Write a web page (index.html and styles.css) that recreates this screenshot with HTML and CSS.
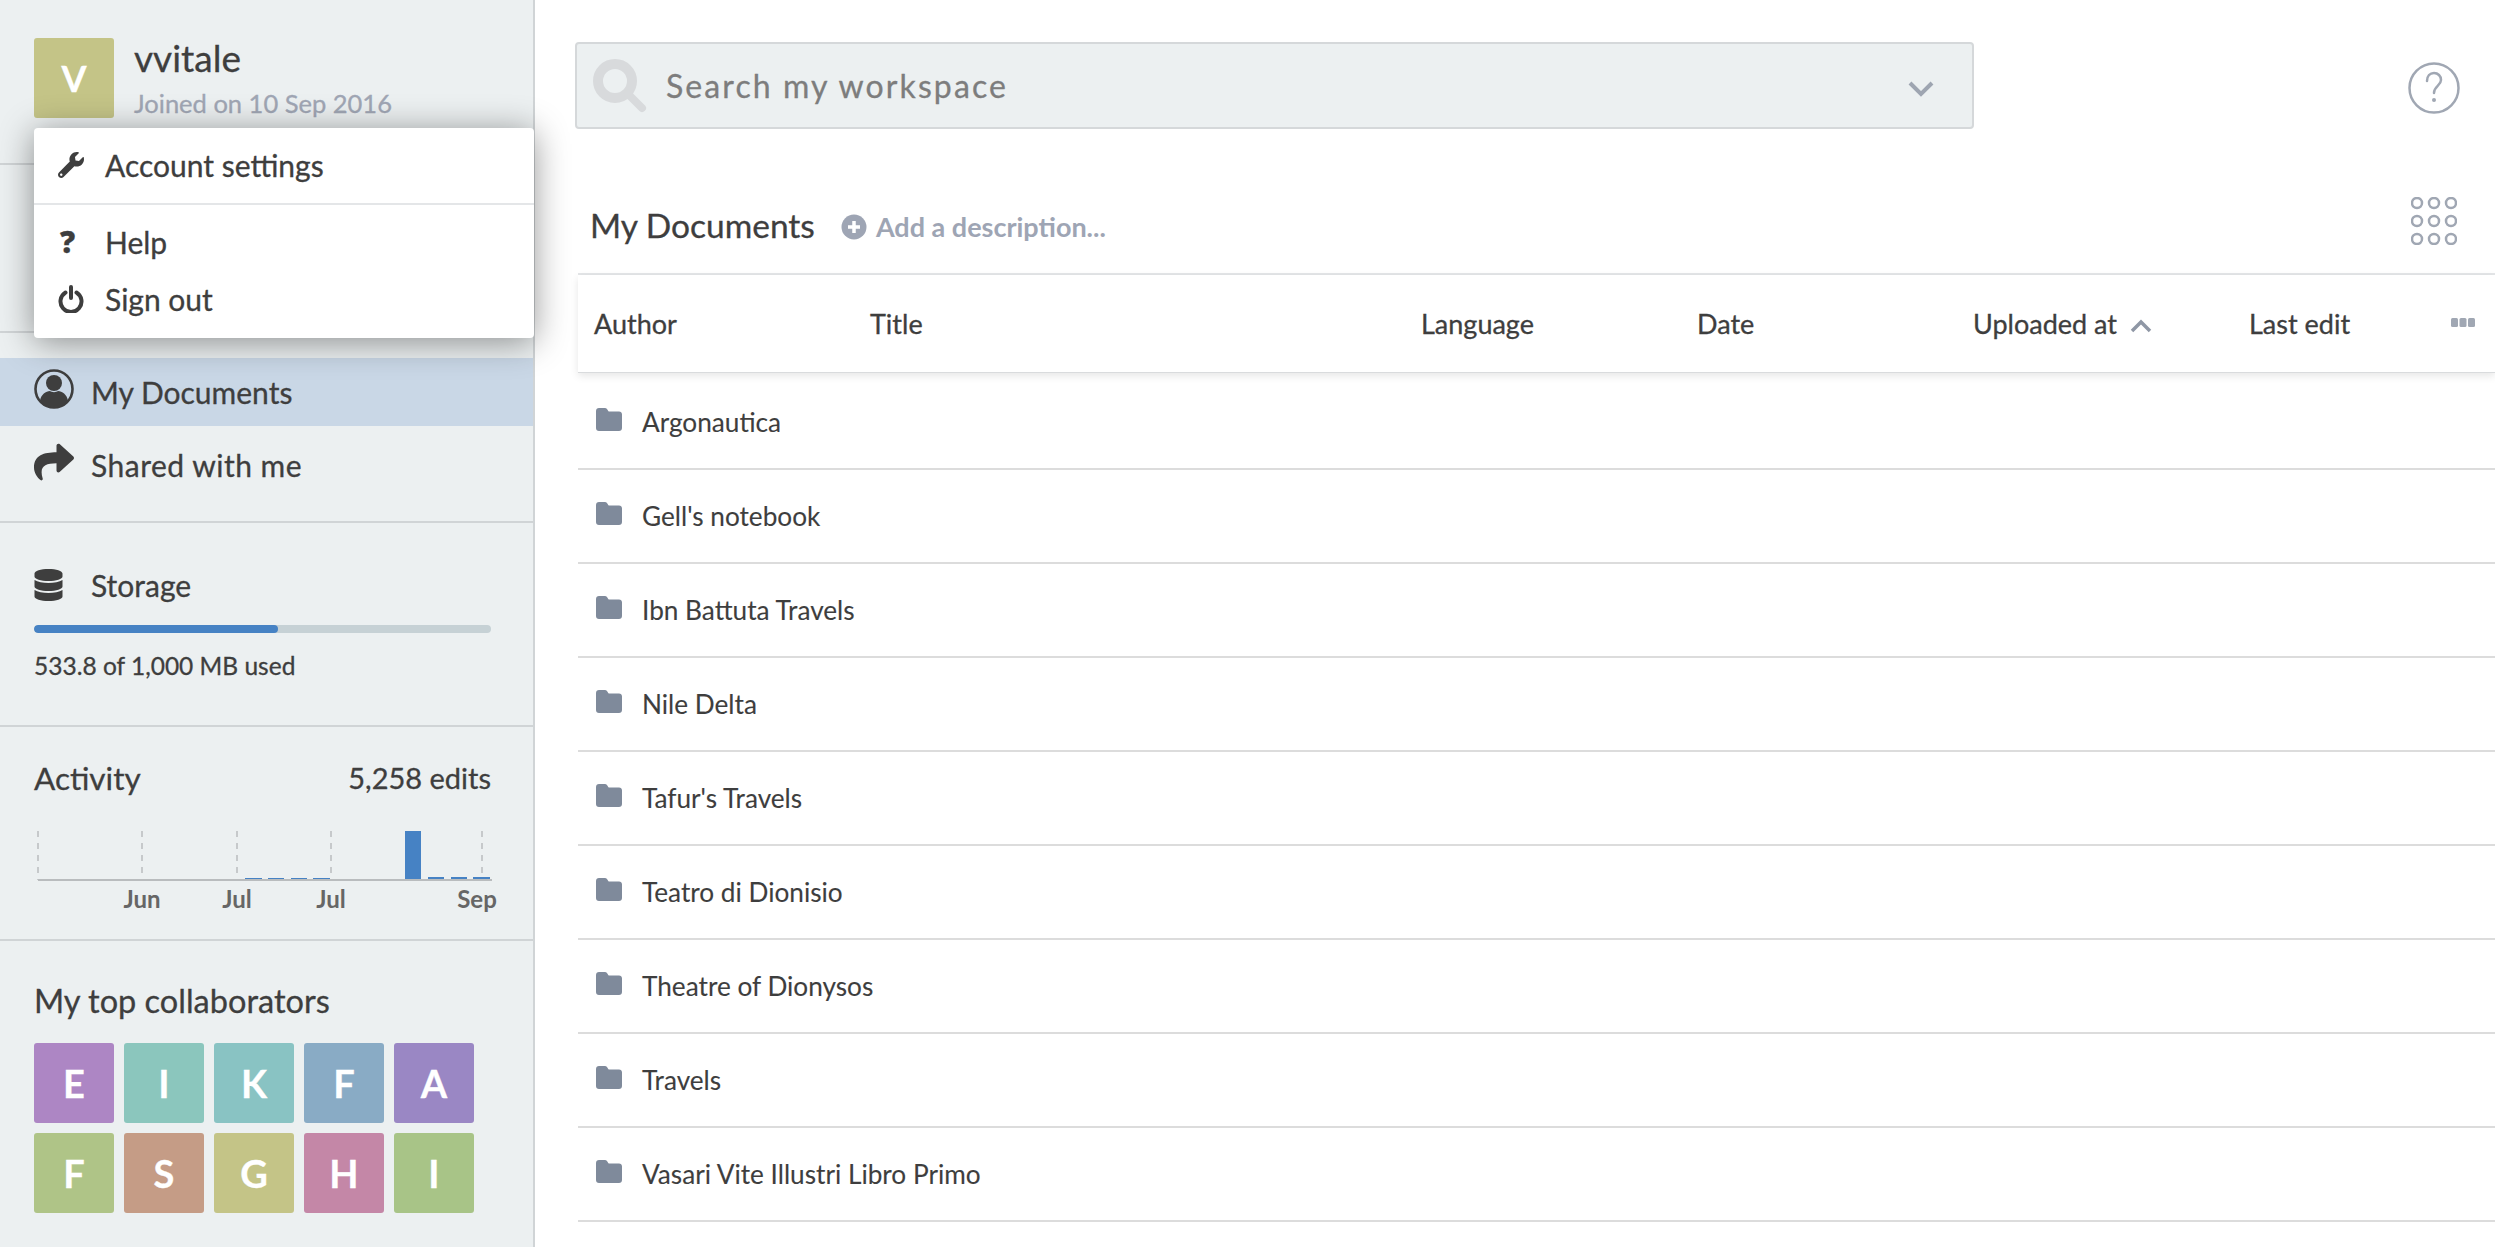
FILE: index.html
```html
<!DOCTYPE html>
<html>
<head>
  <title>My Documents</title>
  <link rel="stylesheet" href="styles.css">
</head>
<body>
  <div class="page">
    <aside class="sidebar">
      <div class="user-box">
        <div class="avatar tile-v">V</div>
        <div class="user-info">
          <div class="user-name">vvitale</div>
          <div class="user-joined">Joined on 10 Sep 2016</div>
        </div>
      </div>

      <div class="user-menu">
        <div class="menu-group menu-first">
          <div class="menu-item">
            <svg class="menu-icon" viewBox="0 0 512 512"><path fill="#3e3e3e" d="M507.73 109.1c-2.24-9.03-13.54-12.09-20.12-5.51l-74.36 74.36-67.88-11.31-11.31-67.88 74.36-74.36c6.62-6.62 3.43-17.9-5.66-20.16-47.38-11.74-99.55.91-136.58 37.93-39.64 39.64-50.55 97.1-34.05 147.2L18.74 402.76c-24.99 24.99-24.99 65.51 0 90.5 24.99 24.99 65.51 24.99 90.5 0l213.21-213.21c50.12 16.71 107.47 5.68 147.37-34.22 37.07-37.07 49.7-89.32 37.91-136.73zM64 472c-13.25 0-24-10.75-24-24 0-13.26 10.75-24 24-24s24 10.74 24 24c0 13.25-10.75 24-24 24z"/></svg>
            Account settings
          </div>
        </div>
        <div class="menu-group">
          <div class="menu-item menu-help">
            <span class="menu-icon question">?</span>
            Help
          </div>
          <div class="menu-item menu-signout">
            <svg class="menu-icon" viewBox="0 0 26 28"><path fill="none" stroke="#3e3e3e" stroke-width="4" stroke-linecap="round" d="M7.5 7.500a10.500 10.500 0 1 0 11 0M13 2v11"/></svg>
            Sign out
          </div>
        </div>
      </div>

      <div class="side-spacer"></div>

      <nav class="side-nav">
        <div class="nav-item active">
          <svg class="nav-icon" viewBox="0 0 40 42">
            <circle cx="20" cy="21" r="18.500" fill="none" stroke="#3e3e3e" stroke-width="2.600"/>
            <circle cx="20" cy="15" r="8" fill="#3e3e3e"/>
            <path fill="#3e3e3e" d="M6 33c1-7 6-9.500 10-10 2 1.500 6 1.500 8 0 4 .5 9 3 10 10-7 8-21 8-28 0z"/>
          </svg>
          My Documents
        </div>
        <div class="nav-item shared">
          <svg class="nav-icon" viewBox="0 0 512 512" preserveAspectRatio="none"><path fill="#3e3e3e" d="M503.691 189.836L327.687 37.851C312.281 24.546 288 35.347 288 56.015v80.053C127.371 137.907 0 170.1 0 322.326c0 61.441 39.581 122.309 83.333 154.132 13.653 9.931 33.111-2.533 28.077-18.631C66.066 312.814 132.917 274.316 288 272.085V360c0 20.7 24.3 31.453 39.687 18.164l176.004-152c11.071-9.562 11.086-26.753 0-36.328z"/></svg>
          Shared with me
        </div>
      </nav>

      <section class="side-box storage">
        <div class="storage-title">
          <svg class="storage-icon" viewBox="0 0 448 512"><path fill="#3e3e3e" d="M448 73.143v45.714C448 159.143 347.667 192 224 192S0 159.143 0 118.857V73.143C0 32.857 100.333 0 224 0s224 32.857 224 73.143zM448 176v102.857C448 319.143 347.667 352 224 352S0 319.143 0 278.857V176c48.125 33.143 136.208 48.572 224 48.572S399.874 209.143 448 176zm0 160v102.857C448 479.143 347.667 512 224 512S0 479.143 0 438.857V336c48.125 33.143 136.208 48.572 224 48.572S399.874 369.143 448 336z"/></svg>
          Storage
        </div>
        <div class="storage-bar"><div class="storage-fill" style="width: 53.38%"></div></div>
        <div class="storage-text">533.8 of 1,000 MB used</div>
      </section>

      <section class="side-box activity">
        <div class="activity-head">
          <span class="activity-title">Activity</span>
          <span class="activity-count">5,258 edits</span>
        </div>
        <svg class="activity-chart" viewBox="34 826 470 90">
          <g stroke="#c6c9cb" stroke-width="2" stroke-dasharray="6 6">
            <line x1="38" y1="831" x2="38" y2="880"/>
            <line x1="142" y1="831" x2="142" y2="880"/>
            <line x1="237" y1="831" x2="237" y2="880"/>
            <line x1="331" y1="831" x2="331" y2="880"/>
            <line x1="482" y1="831" x2="482" y2="880"/>
          </g>
          <g fill="#4682c4">
            <rect x="245" y="878" width="17" height="2"/>
            <rect x="268" y="878" width="16" height="2"/>
            <rect x="291" y="878" width="16" height="2"/>
            <rect x="313" y="878" width="17" height="2"/>
            <rect x="405" y="831" width="16" height="49"/>
            <rect x="428" y="877" width="16" height="3"/>
            <rect x="451" y="877" width="16" height="3"/>
            <rect x="473" y="877" width="17" height="3"/>
          </g>
          <line x1="38" y1="880" x2="492" y2="880" stroke="#b9bcbe" stroke-width="2"/>
          <g class="chart-label" text-anchor="middle">
            <text x="142" y="908">Jun</text>
            <text x="237" y="908">Jul</text>
            <text x="331" y="908">Jul</text>
            <text x="477" y="908">Sep</text>
          </g>
        </svg>
      </section>

      <section class="collaborators">
        <div class="collab-title">My top collaborators</div>
        <div class="collab-grid">
          <div class="tile tile-e">E</div>
          <div class="tile tile-i">I</div>
          <div class="tile tile-k">K</div>
          <div class="tile tile-f">F</div>
          <div class="tile tile-a">A</div>
          <div class="tile tile-f2">F</div>
          <div class="tile tile-s">S</div>
          <div class="tile tile-v">G</div>
          <div class="tile tile-h">H</div>
          <div class="tile tile-i2">I</div>
        </div>
      </section>
    </aside>

    <main class="main">
      <div class="top-bar">
        <div class="search-box">
          <svg class="search-icon" viewBox="0 0 54 54"><circle cx="22" cy="22" r="17" fill="none" stroke="#d8dadc" stroke-width="10"/><line x1="35" y1="35" x2="49" y2="49" stroke="#d8dadc" stroke-width="8" stroke-linecap="round"/></svg>
          <span class="search-text">Search my workspace</span>
          <svg class="search-caret" viewBox="0 0 26 18"><path fill="none" stroke="#9ea5b1" stroke-width="4" d="M2 3l11 11L24 3"/></svg>
        </div>
        <svg class="help-icon" viewBox="0 0 52 52">
          <circle cx="26" cy="26" r="24.500" fill="none" stroke="#a0a7b3" stroke-width="2.500"/>
          <path fill="none" stroke="#a0a7b3" stroke-width="2.500" stroke-linecap="round" d="M19 19c0-5 3-8 7-8s7 3 7 7c0 6-7 6-7 13"/>
          <circle cx="26" cy="38" r="2" fill="#a0a7b3"/>
        </svg>
      </div>

      <div class="doc-head">
        <span class="doc-title">My Documents</span>
        <svg class="add-icon" viewBox="0 0 26 26"><circle cx="13" cy="13" r="12.500" fill="#9ea5b4"/><path stroke="#fff" stroke-width="3.500" d="M13 7v12M7 13h12"/></svg>
        <span class="add-text">Add a description...</span>
        <svg class="grid-icon" viewBox="0 0 46 48">
          <g fill="none" stroke="#a0a7b3" stroke-width="2.500">
            <circle cx="6" cy="6" r="5"/><circle cx="23" cy="6" r="5"/><circle cx="40" cy="6" r="5"/>
            <circle cx="6" cy="24" r="5"/><circle cx="23" cy="24" r="5"/><circle cx="40" cy="24" r="5"/>
            <circle cx="6" cy="42" r="5"/><circle cx="23" cy="42" r="5"/><circle cx="40" cy="42" r="5"/>
          </g>
        </svg>
      </div>

      <div class="table-head">
        <span class="col">Author</span>
        <span class="col col-wide">Title</span>
        <span class="col">Language</span>
        <span class="col">Date</span>
        <span class="col">Uploaded at
          <svg class="sort-icon" viewBox="0 0 22 14"><path fill="none" stroke="#8f97a5" stroke-width="3.500" d="M2 12l9-9 9 9"/></svg>
        </span>
        <span class="col">Last edit</span>
        <svg class="more-icon" viewBox="0 0 24 10"><g fill="#a0a7b3"><rect width="7" height="9" rx="1.500"/><rect x="8.500" width="7" height="9" rx="1.500"/><rect x="17" width="7" height="9" rx="1.500"/></g></svg>
      </div>

      <div class="doc-row"><svg class="folder" viewBox="0 0 26 23"><path fill="#7f8a9b" d="M3 0h6c1.500 0 2.300 1 2.800 2.300.3.800.8 1.200 1.700 1.200H23c1.800 0 3 1.200 3 3V20c0 1.800-1.200 3-3 3H3c-1.800 0-3-1.200-3-3V3C0 1.200 1.200 0 3 0z"/></svg>Argonautica</div>
      <div class="doc-row"><svg class="folder" viewBox="0 0 26 23"><path fill="#7f8a9b" d="M3 0h6c1.500 0 2.300 1 2.800 2.300.3.800.8 1.200 1.700 1.200H23c1.800 0 3 1.200 3 3V20c0 1.800-1.200 3-3 3H3c-1.800 0-3-1.200-3-3V3C0 1.200 1.200 0 3 0z"/></svg>Gell's notebook</div>
      <div class="doc-row"><svg class="folder" viewBox="0 0 26 23"><path fill="#7f8a9b" d="M3 0h6c1.500 0 2.300 1 2.800 2.300.3.800.8 1.200 1.700 1.200H23c1.800 0 3 1.200 3 3V20c0 1.800-1.200 3-3 3H3c-1.800 0-3-1.200-3-3V3C0 1.200 1.200 0 3 0z"/></svg>Ibn Battuta Travels</div>
      <div class="doc-row"><svg class="folder" viewBox="0 0 26 23"><path fill="#7f8a9b" d="M3 0h6c1.500 0 2.300 1 2.800 2.300.3.800.8 1.200 1.700 1.200H23c1.800 0 3 1.200 3 3V20c0 1.800-1.200 3-3 3H3c-1.800 0-3-1.200-3-3V3C0 1.200 1.200 0 3 0z"/></svg>Nile Delta</div>
      <div class="doc-row"><svg class="folder" viewBox="0 0 26 23"><path fill="#7f8a9b" d="M3 0h6c1.500 0 2.300 1 2.800 2.300.3.800.8 1.200 1.700 1.200H23c1.800 0 3 1.200 3 3V20c0 1.800-1.200 3-3 3H3c-1.800 0-3-1.200-3-3V3C0 1.200 1.200 0 3 0z"/></svg>Tafur's Travels</div>
      <div class="doc-row"><svg class="folder" viewBox="0 0 26 23"><path fill="#7f8a9b" d="M3 0h6c1.500 0 2.300 1 2.800 2.300.3.800.8 1.200 1.700 1.200H23c1.800 0 3 1.200 3 3V20c0 1.800-1.200 3-3 3H3c-1.800 0-3-1.200-3-3V3C0 1.200 1.200 0 3 0z"/></svg>Teatro di Dionisio</div>
      <div class="doc-row"><svg class="folder" viewBox="0 0 26 23"><path fill="#7f8a9b" d="M3 0h6c1.500 0 2.300 1 2.800 2.300.3.800.8 1.200 1.700 1.200H23c1.800 0 3 1.200 3 3V20c0 1.800-1.200 3-3 3H3c-1.800 0-3-1.200-3-3V3C0 1.200 1.200 0 3 0z"/></svg>Theatre of Dionysos</div>
      <div class="doc-row"><svg class="folder" viewBox="0 0 26 23"><path fill="#7f8a9b" d="M3 0h6c1.500 0 2.300 1 2.800 2.300.3.800.8 1.200 1.700 1.200H23c1.800 0 3 1.200 3 3V20c0 1.800-1.200 3-3 3H3c-1.800 0-3-1.200-3-3V3C0 1.200 1.200 0 3 0z"/></svg>Travels</div>
      <div class="doc-row"><svg class="folder" viewBox="0 0 26 23"><path fill="#7f8a9b" d="M3 0h6c1.500 0 2.300 1 2.800 2.300.3.800.8 1.200 1.700 1.200H23c1.800 0 3 1.200 3 3V20c0 1.800-1.200 3-3 3H3c-1.800 0-3-1.200-3-3V3C0 1.200 1.200 0 3 0z"/></svg>Vasari Vite Illustri Libro Primo</div>
    </main>
  </div>
</body>
</html>
```

FILE: styles.css
```css
body {
  margin: 0;
  height: 1247px;
  overflow: hidden;
  background-color: #ffffff;
  color: #3e3e3e;
  font-family: 'Lato', 'Open Sans', sans-serif;
  -webkit-text-stroke: 0.3px currentColor;
}

.page {
  display: flex;
  height: 1247px;
}

/* Sidebar */
.sidebar {
  position: relative;
  width: 533px;
  flex-shrink: 0;
  background-color: #ecf0f1;
  border-right: 2px solid #d0d4d6;
}

.user-box {
  display: flex;
  gap: 20px;
  height: 125px;
  padding: 38px 34px 0;
  border-bottom: 2px solid #d0d4d6;
}

.avatar {
  display: flex;
  align-items: center;
  justify-content: center;
  width: 80px;
  height: 80px;
  border-radius: 3px;
  color: #ffffff;
  font-size: 36px;
  font-weight: 700;
}

.user-name {
  font-size: 37px;
  line-height: 40px;
}

.user-joined {
  margin-top: 7px;
  color: #a0a6b4;
  font-size: 25.500px;
  line-height: 36px;
}

.user-menu {
  position: absolute;
  top: 128px;
  left: 34px;
  width: 500px;
  height: 210px;
  background-color: #ffffff;
  border-radius: 4px;
  box-shadow: 0 4px 34px rgba(0, 0, 0, 0.42);
  font-size: 30px;
}

.menu-group + .menu-group {
  border-top: 2px solid #e4e6e8;
}

.menu-first {
  height: 75px;
}

.menu-item {
  display: flex;
  align-items: center;
  padding-left: 24px;
}

.menu-first .menu-item {
  height: 74px;
}

.menu-help {
  height: 60px;
  margin-top: 7px;
}

.menu-signout {
  height: 54px;
}

.menu-icon {
  width: 26px;
  height: 28px;
  margin-right: 21px;
}

.question {
  font-family: 'Open Sans', sans-serif;
  font-size: 30px;
  font-weight: 800;
  line-height: 28px;
  text-indent: 2px;
}

.side-spacer {
  height: 166px;
  border-bottom: 2px solid #d0d4d6;
}

.side-nav {
  height: 190px;
  padding-top: 25px;
  box-sizing: border-box;
  border-bottom: 2px solid #d0d4d6;
  font-size: 30px;
}

.nav-item {
  display: flex;
  align-items: center;
  height: 68px;
  padding-left: 34px;
}

.nav-item.active {
  background-color: #c9d7e6;
}

.nav-item.shared {
  height: 78px;
  letter-spacing: 0.5px;
}

.nav-icon {
  width: 40px;
  height: 42px;
  margin-right: 17px;
  margin-top: -6px;
}

.side-box {
  padding: 0 42px 0 34px;
  border-bottom: 2px solid #d0d4d6;
}

.storage {
  height: 202px;
}

.storage-title {
  display: flex;
  align-items: center;
  height: 36px;
  padding-top: 44px;
  font-size: 30px;
}

.storage-icon {
  width: 29px;
  height: 32px;
  margin-right: 28px;
}

.storage-bar {
  height: 8px;
  margin-top: 22px;
  border-radius: 4px;
  background-color: #c6d1d5;
  overflow: hidden;
}

.storage-fill {
  height: 100%;
  border-radius: 4px;
  background-color: #4682c4;
}

.storage-text {
  margin-top: 16px;
  font-size: 24.500px;
  line-height: 34px;
}

.activity {
  height: 212px;
}

.activity-head {
  display: flex;
  justify-content: space-between;
  padding-top: 32px;
  line-height: 38px;
}

.activity-title {
  font-size: 31.500px;
}

.activity-count {
  font-size: 29px;
}

.activity-chart {
  display: block;
  width: 470px;
  height: 90px;
  margin-top: 29px;
  overflow: visible;
}

.chart-label {
  fill: #666666;
  font-size: 24px;
  font-weight: 700;
  -webkit-text-stroke: 0;
}

.collaborators {
  padding: 42px 34px 0;
}

.collab-title {
  font-size: 32.500px;
  line-height: 36px;
}

.collab-grid {
  display: grid;
  grid-template-columns: repeat(5, 80px);
  gap: 10px;
  margin-top: 24px;
}

.tile {
  display: flex;
  align-items: center;
  justify-content: center;
  height: 80px;
  border-radius: 3px;
  color: #ffffff;
  font-size: 38px;
  font-weight: 700;
}

.tile-v { background-color: #c4c487; }
.tile-e { background-color: #ad86c4; }
.tile-i { background-color: #8bc6bd; }
.tile-k { background-color: #89c3c3; }
.tile-f { background-color: #89abc5; }
.tile-a { background-color: #9a87c4; }
.tile-f2 { background-color: #afc487; }
.tile-s { background-color: #c59c86; }
.tile-h { background-color: #c487a7; }
.tile-i2 { background-color: #a8c487; }

/* Main column */
.main {
  flex: 1;
  min-width: 0;
  padding-left: 43px;
}

.top-bar {
  display: flex;
  align-items: center;
  height: 87px;
  margin-top: 42px;
  margin-left: -3px;
}

.search-box {
  display: flex;
  align-items: center;
  box-sizing: border-box;
  width: 1399px;
  height: 87px;
  padding: 0 29px 0 16px;
  background-color: #ecf0f1;
  border: 2px solid #d5d8da;
  border-radius: 4px;
}

.search-icon {
  width: 54px;
  height: 54px;
  margin-right: 19px;
}

.search-text {
  flex: 1;
  color: #7d7d7d;
  font-size: 32px;
  letter-spacing: 2.100px;
}

.search-caret {
  width: 26px;
  height: 18px;
  margin-top: 6px;
  margin-right: 9px;
}

.help-icon {
  width: 52px;
  height: 52px;
  margin-left: 434px;
  margin-top: 4px;
}

.doc-head {
  display: flex;
  align-items: center;
  height: 146px;
  box-sizing: border-box;
  padding-top: 47px;
  padding-left: 12px;
  border-bottom: 2px solid #e4e6e8;
}

.doc-title {
  font-size: 33.500px;
}

.add-icon {
  width: 26px;
  height: 26px;
  margin-left: 26px;
  margin-right: 9px;
  margin-top: 4px;
}

.add-text {
  flex: 1;
  margin-top: 3px;
  color: #9ea5b4;
  font-size: 27px;
  font-weight: 700;
  -webkit-text-stroke: 0;
}

.grid-icon {
  width: 46px;
  height: 48px;
  margin-right: 38px;
  margin-top: -8px;
}

.table-head {
  position: relative;
  display: grid;
  grid-template-columns: 276px 551px 276px 276px 276px 276px;
  align-items: center;
  height: 97px;
  margin-bottom: 3px;
  padding-left: 16px;
  border-bottom: 1px solid #d9dbdd;
  box-shadow: 0 3px 8px rgba(0, 0, 0, 0.1);
  font-size: 27px;
}

.sort-icon {
  width: 22px;
  height: 14px;
  margin-left: 6px;
  vertical-align: 1px;
}

.more-icon {
  position: absolute;
  top: 43px;
  right: 20px;
  width: 24px;
  height: 10px;
}

.doc-row {
  display: flex;
  align-items: center;
  height: 92px;
  padding-left: 18px;
  border-bottom: 2px solid #dcdcdc;
  font-size: 26.200px;
  -webkit-text-stroke: 0.1px currentColor;
}

.folder {
  width: 26px;
  height: 23px;
  margin-right: 20px;
  margin-top: -6px;
}
```
